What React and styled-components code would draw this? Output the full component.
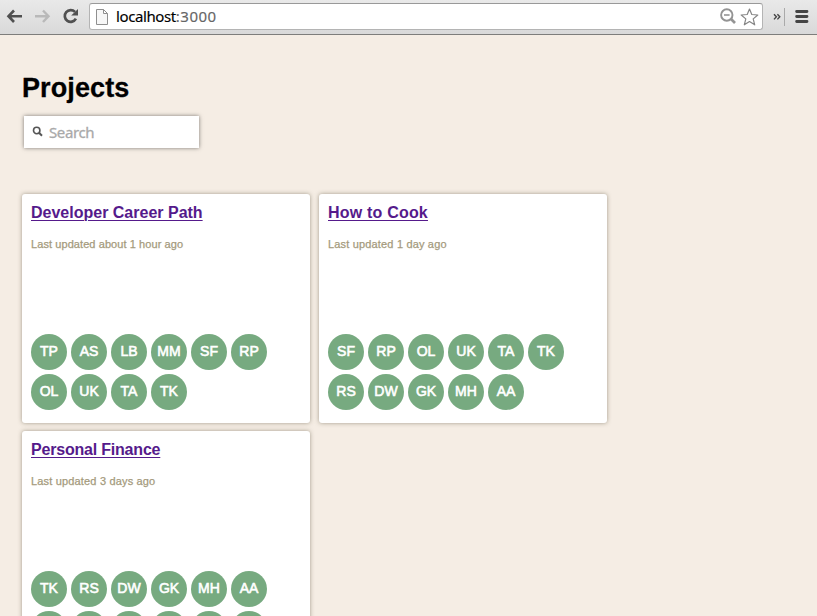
import React from "react";
import styled, { createGlobalStyle } from "styled-components";

const GlobalStyle = createGlobalStyle`
  * { box-sizing: border-box; }
  html, body { margin: 0; padding: 0; }
  body {
    background: #f5ede4;
    font-family: "Liberation Sans", Arial, sans-serif;
    overflow: hidden;
  }
`;

const Window = styled.div`
  height: 616px;
  overflow: hidden;
`;

const Toolbar = styled.header`
  display: flex;
  align-items: flex-start;
  height: 35px;
  padding: 3px 8px 0 6px;
  background: linear-gradient(#e9e9e9, #d9d9d9);
  border-bottom: 1px solid #7d7d7b;
`;

const NavButtons = styled.nav`
  display: flex;
  gap: 10px;
  width: 83px;
  padding-top: 4px;

  svg { display: block; }
`;

const AddressBar = styled.div`
  display: flex;
  align-items: center;
  width: 674px;
  height: 27px;
  flex: none;
  padding: 0 3px 0 6px;
  background: #fff;
  border: 1px solid #b4b4b4;
  border-top-color: #999;
  border-radius: 3px;

  svg { display: block; flex: none; }
`;

const Url = styled.span`
  flex: 1;
  margin: -2px 0 0 8px;
  font: 15px/24px "Noto Sans", "Open Sans", sans-serif;
  letter-spacing: -0.4px;
  color: #000;
  -webkit-text-stroke: 0.15px currentColor;
`;

const Port = styled.span`
  letter-spacing: 0.5px;
  color: #666;
`;

const AddressIcons = styled.div`
  display: flex;
  align-items: center;
  gap: 4px;
`;

const Extras = styled.div`
  display: flex;
  align-items: center;
  height: 27px;
  margin-left: 10px;

  svg { display: block; flex: none; }
`;

const Divider = styled.i`
  width: 1px;
  height: 18px;
  margin: 0 10px 0 2px;
  background: #aaa;
`;

const Page = styled.main`
  padding: 37px 22px 0;
`;

const Heading = styled.h1`
  margin: 0;
  font-size: 27px;
  line-height: 32px;
  letter-spacing: 0.1px;
  -webkit-text-stroke: 0.3px #000;
  color: #000;
`;

const SearchBox = styled.label`
  display: flex;
  align-items: center;
  width: 175px;
  height: 32px;
  margin: 12px 0 46px 2px;
  padding-left: 8px;
  background: #fff;
  box-shadow: 0 0 4px rgba(0, 0, 0, 0.5);

  svg { display: block; flex: none; margin-top: -2px; }
`;

const SearchInput = styled.input`
  width: 130px;
  margin-left: 6px;
  padding: 0;
  border: 0;
  outline: 0;
  background: transparent;
  font: 15px/24px "Noto Sans", "Open Sans", sans-serif;
  letter-spacing: -0.4px;
  -webkit-text-stroke: 0.3px #a9a9a9;

  &::placeholder { color: #a9a9a9; opacity: 1; }
`;

const Grid = styled.section`
  display: grid;
  grid-template-columns: repeat(2, 288px);
  gap: 8px 9px;
`;

const CardBox = styled.article`
  display: flex;
  flex-direction: column;
  height: 229px;
  padding: 9px 9px 13px;
  background: #fff;
  border-radius: 3px;
  box-shadow: 0 0 4px rgba(80, 72, 50, 0.5);
`;

const Title = styled.a`
  align-self: flex-start;
  font-size: 16px;
  font-weight: bold;
  line-height: 20px;
  letter-spacing: ${(p) => p.$tracking}px;
  white-space: nowrap;
  color: #551a8b;
  text-decoration: underline;
  text-decoration-thickness: 1px;
  text-underline-offset: 2px;
`;

const Updated = styled.p`
  margin: 14px 0 0;
  font-size: 11px;
  line-height: 14px;
  letter-spacing: ${(p) => p.$tracking}px;
  color: #a49a7c;
  -webkit-text-stroke: 0.25px #a49a7c;
`;

const Members = styled.div`
  display: flex;
  flex-wrap: wrap;
  gap: 4px;
  width: 240px;
  margin-top: 83px;
`;

const Avatar = styled.span`
  width: 36px;
  height: 36px;
  border-radius: 50%;
  background: #77aa80;
  color: #fff;
  font-size: 14px;
  line-height: 35px;
  text-align: center;
  -webkit-text-stroke: 0.6px #fff;
`;

const projects = [
  {
    title: "Developer Career Path",
    tracking: 0,
    updated: "Last updated about 1 hour ago",
    updatedTracking: 0.08,
    members: ["TP", "AS", "LB", "MM", "SF", "RP", "OL", "UK", "TA", "TK"],
  },
  {
    title: "How to Cook",
    tracking: 0.2,
    updated: "Last updated 1 day ago",
    updatedTracking: 0.17,
    members: ["SF", "RP", "OL", "UK", "TA", "TK", "RS", "DW", "GK", "MH", "AA"],
  },
  {
    title: "Personal Finance",
    tracking: -0.2,
    updated: "Last updated 3 days ago",
    updatedTracking: 0.17,
    members: ["TK", "RS", "DW", "GK", "MH", "AA", "", "", "", "", "", ""],
  },
];

const BackIcon = () => (
  <svg width="18" height="18" viewBox="0 0 18 18" fill="none" stroke="#505050" strokeWidth="2.6">
    <path d="M8 3.5 2.5 9.2 8 15M2.8 9.2h13.2" />
  </svg>
);

const ForwardIcon = () => (
  <svg width="18" height="18" viewBox="0 0 18 18" fill="none" stroke="#b9b9b9" strokeWidth="2.4">
    <path d="M9 3.5 14.5 9.2 9 15M14.2 9.2H1" />
  </svg>
);

const ReloadIcon = () => (
  <svg width="18" height="18" viewBox="0 0 18 18" fill="none">
    <path d="M13 4.9A5.9 5.9 0 1 0 13.9 11.7" stroke="#505050" strokeWidth="2.7" />
    <path d="M16 2v6.6H9.2Z" fill="#505050" />
  </svg>
);

const PageIcon = () => (
  <svg width="12" height="16" viewBox="0 0 12 16" fill="#f7f7f7" stroke="#8f8f8f">
    <path d="M.5.5h7l4 4v11H.5ZM7.5.5v4h4" />
  </svg>
);

const ZoomOutIcon = () => (
  <svg width="16" height="17" viewBox="0 0 16 17" fill="none" stroke="#949494">
    <circle cx="6.8" cy="7" r="5.7" strokeWidth="1.9" />
    <path d="M4 7h5.6" strokeWidth="1.6" />
    <path d="m11 11 4 4" strokeWidth="2.7" />
  </svg>
);

const StarIcon = () => (
  <svg width="19" height="18" viewBox="0 0 19 18" fill="#fff" stroke="#858585" strokeWidth="1.2" strokeLinejoin="round">
    <path d="m9.5 1 2.3 5.5 6 .5-4.6 3.9 1.5 5.9-5.2-3.2-5.2 3.2 1.5-5.9L1.2 7l6-.5Z" />
  </svg>
);

const OverflowIcon = () => (
  <svg width="9" height="8" viewBox="0 0 9 8" fill="none" stroke="#444" strokeWidth="1.4">
    <path d="m1 1.2 2.4 2.6L1 6.4M4.4 1.2l2.4 2.6-2.4 2.6" />
  </svg>
);

const MenuIcon = () => (
  <svg width="14" height="13" viewBox="0 0 14 13" stroke="#444" strokeWidth="2.8" strokeLinecap="round">
    <path d="M1.6 1.5h10.4M1.6 6.5h10.4M1.6 11.5h10.4" />
  </svg>
);

const SearchIcon = () => (
  <svg width="11" height="11" viewBox="0 0 11 11" fill="none" stroke="#555">
    <circle cx="4.7" cy="4.5" r="3.2" strokeWidth="1.6" />
    <path d="m7 6.8 3 3" strokeWidth="2" />
  </svg>
);

const Card = ({ project }) => (
  <CardBox>
    <Title href="#" $tracking={project.tracking}>{project.title}</Title>
    <Updated $tracking={project.updatedTracking}>{project.updated}</Updated>
    <Members>
      {project.members.map((m, i) => (
        <Avatar key={i}>{m}</Avatar>
      ))}
    </Members>
  </CardBox>
);

export default function App() {
  return (
    <Window>
      <GlobalStyle />
      <Toolbar>
        <NavButtons>
          <BackIcon />
          <ForwardIcon />
          <ReloadIcon />
        </NavButtons>
        <AddressBar>
          <PageIcon />
          <Url>localhost<Port>:3000</Port></Url>
          <AddressIcons>
            <ZoomOutIcon />
            <StarIcon />
          </AddressIcons>
        </AddressBar>
        <Extras>
          <OverflowIcon />
          <Divider />
          <MenuIcon />
        </Extras>
      </Toolbar>
      <Page>
        <Heading>Projects</Heading>
        <SearchBox>
          <SearchIcon />
          <SearchInput placeholder="Search" />
        </SearchBox>
        <Grid>
          {projects.map((p) => (
            <Card key={p.title} project={p} />
          ))}
        </Grid>
      </Page>
    </Window>
  );
}
